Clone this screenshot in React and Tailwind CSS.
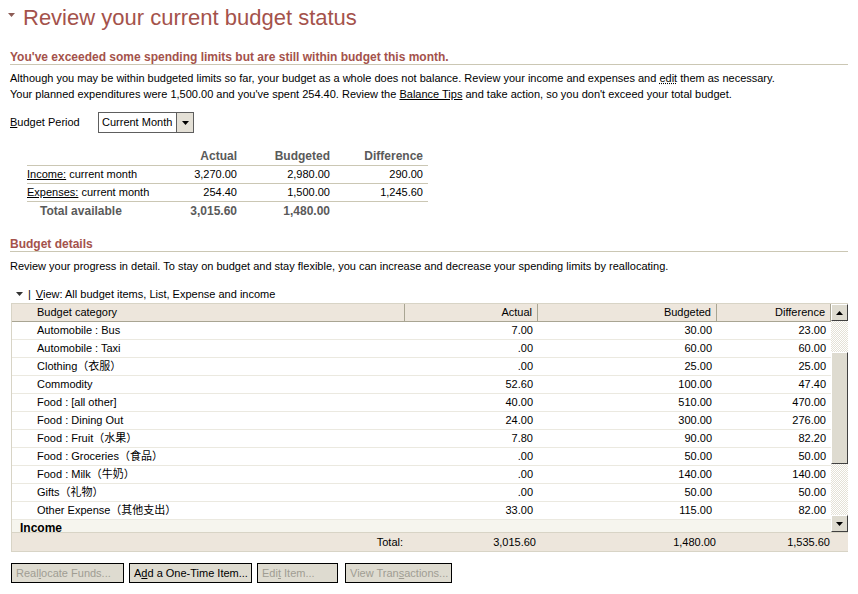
import React from "react";

const rows = [
  ["Automobile : Bus", "7.00", "30.00", "23.00"],
  ["Automobile : Taxi", ".00", "60.00", "60.00"],
  ["Clothing（衣服）", ".00", "25.00", "25.00"],
  ["Commodity", "52.60", "100.00", "47.40"],
  ["Food : [all other]", "40.00", "510.00", "470.00"],
  ["Food : Dining Out", "24.00", "300.00", "276.00"],
  ["Food : Fruit（水果）", "7.80", "90.00", "82.20"],
  ["Food : Groceries（食品）", ".00", "50.00", "50.00"],
  ["Food : Milk（牛奶）", ".00", "140.00", "140.00"],
  ["Gifts（礼物）", ".00", "50.00", "50.00"],
  ["Other Expense（其他支出）", "33.00", "115.00", "82.00"],
];

const cols = "grid grid-cols-[393px_133px_179px_114px]";

const Tri = ({ className = "" }) => (
  <svg width="7" height="4" viewBox="0 0 7 4" className={className}>
    <path d="M0 0h7L3.5 4z" fill="currentColor" />
  </svg>
);

const Btn = ({ children, disabled, w }) => (
  <button
    className={`h-[20px] ${w} border border-black bg-[#dedbd0] text-left pl-[4px] text-[11px] leading-none ${disabled ? "text-[#a09d93]" : "text-black"}`}
  >
    {children}
  </button>
);

const App = () => {
  return (
    <div className="w-[858px] h-[594px] bg-white text-black text-[11px] font-['Liberation_Sans','Noto_Sans_CJK_SC',sans-serif] overflow-hidden">
      {/* title */}
      <div className="h-[36px] flex items-center pl-[8px] text-[#a4524b]">
        <Tri className="text-[#8c5c55] mr-[8px] -mt-[6px]" />
        <span className="text-[22px] leading-none">Review your current budget status</span>
      </div>

      <div className="px-[10px]">
        <div className="mt-[14px] h-[15px] leading-[14px] font-bold text-[12px] text-[#a4524b] border-b border-[#cbc7b4]">
          You've exceeded some spending limits but are still within budget this month.
        </div>
        <div className="mt-[5px] leading-[16px]">
          <div>
            Although you may be within budgeted limits so far, your budget as a whole does not balance. Review your income and expenses and{" "}
            <span className="underline decoration-dotted">edit</span> them as necessary.
          </div>
          <div>
            Your planned expenditures were 1,500.00 and you've spent 254.40. Review the{" "}
            <span className="underline">Balance Tips</span> and take action, so you don't exceed your total budget.
          </div>
        </div>

        {/* budget period */}
        <div className="mt-[10px] flex items-center h-[21px]">
          <span className="w-[88px]">
            <span className="underline">B</span>udget Period
          </span>
          <div className="w-[96px] h-[21px] border border-[#5e5e5e] flex items-stretch">
            <span className="flex-1 flex items-center pl-[3px]">Current Month</span>
            <span className="w-[17px] bg-[#e4e0d6] border-l border-[#5e5e5e] flex items-center justify-center">
              <Tri className="text-black" />
            </span>
          </div>
        </div>

        {/* summary */}
        <div className="mt-[14px] ml-[17px] w-[401px]">
          <div className="grid grid-cols-[135px_80px_93px_93px] h-[19px] items-center border-b border-[#cbc7b4] font-bold text-[#5a5a5a] text-[12px]">
            <span></span>
            <span className="text-right pr-[5px]">Actual</span>
            <span className="text-right pr-[5px]">Budgeted</span>
            <span className="text-right pr-[5px]">Difference</span>
          </div>
          <div className="grid grid-cols-[135px_80px_93px_93px] h-[18px] items-center border-b border-[#cbc7b4]">
            <span><span className="underline">Income:</span> current month</span>
            <span className="text-right pr-[5px]">3,270.00</span>
            <span className="text-right pr-[5px]">2,980.00</span>
            <span className="text-right pr-[5px]">290.00</span>
          </div>
          <div className="grid grid-cols-[135px_80px_93px_93px] h-[18px] items-center border-b border-[#cbc7b4]">
            <span><span className="underline">Expenses:</span> current month</span>
            <span className="text-right pr-[5px]">254.40</span>
            <span className="text-right pr-[5px]">1,500.00</span>
            <span className="text-right pr-[5px]">1,245.60</span>
          </div>
          <div className="grid grid-cols-[135px_80px_93px_93px] h-[17px] items-center font-bold text-[#5a5a5a] text-[12px]">
            <span className="pl-[13px]">Total available</span>
            <span className="text-right pr-[5px]">3,015.60</span>
            <span className="text-right pr-[5px]">1,480.00</span>
            <span></span>
          </div>
        </div>

        <div className="mt-[18px] h-[15px] leading-[14px] font-bold text-[12px] text-[#a4524b] border-b border-[#cbc7b4]">
          Budget details
        </div>
        <div className="mt-[6px] leading-[16px]">
          Review your progress in detail. To stay on budget and stay flexible, you can increase and decrease your spending limits by reallocating.
        </div>

        <div className="mt-[12px] h-[16px] flex items-center pl-[6px]">
          <Tri className="text-[#333]" />
          <span className="ml-[5px] mr-[5px]">|</span>
          <span><span className="underline">V</span>iew: All budget items, List, Expense and income</span>
        </div>
      </div>

      {/* grid */}
      <div className="mt-[1px] ml-[11px] w-[837px] border-l border-t border-[#d8d4c6]">
        <div className="flex h-[228px]">
          <div className="w-[819px] overflow-hidden">
            <div className={`${cols} h-[18px] bg-[#ede6dc] border-b border-[#a9a593]`}>
              <span className="flex items-center pl-[25px] border-r border-[#a9a593]">Budget category</span>
              <span className="flex items-center justify-end pr-[5px] border-r border-[#a9a593]">Actual</span>
              <span className="flex items-center justify-end pr-[5px] border-r border-[#a9a593]">Budgeted</span>
              <span className="flex items-center justify-end pr-[5px] border-r border-[#a9a593]">Difference</span>
            </div>
            {rows.map((r) => (
              <div key={r[0]} className={`${cols} h-[18px] border-b border-[#ebe9e0]`}>
                <span className="flex items-center pl-[25px] whitespace-nowrap">{r[0]}</span>
                <span className="flex items-center justify-end pr-[5px]">{r[1]}</span>
                <span className="flex items-center justify-end pr-[5px]">{r[2]}</span>
                <span className="flex items-center justify-end pr-[5px]">{r[3]}</span>
              </div>
            ))}
            <div className="h-[18px] bg-[#f6f5ee] flex items-start pt-[1px] pl-[8px] font-bold text-[12px] leading-[14px]">Income</div>
          </div>
          {/* scrollbar */}
          <div className="w-[17px] flex flex-col bg-[repeating-conic-gradient(#ffffff_0_25%,#e4e1d6_0_50%)] bg-[length:2px_2px]">
            <div className="h-[17px] bg-[#dedbd0] border border-t-white border-l-white border-r-[#404040] border-b-[#404040] flex items-center justify-center">
              <Tri className="text-black rotate-180" />
            </div>
            <div className="h-[31px]" />
            <div className="h-[112px] bg-[#dedbd0] border border-t-white border-l-white border-r-[#404040] border-b-[#404040]" />
            <div className="flex-1" />
            <div className="h-[17px] bg-[#dedbd0] border border-t-white border-l-white border-r-[#404040] border-b-[#404040] flex items-center justify-center">
              <Tri className="text-black" />
            </div>
          </div>
        </div>
        <div className="flex h-[20px] bg-[#ede6dc] border-t border-b border-[#d8d4c6]">
          <div className={`${cols} w-[819px]`}>
            <span className="flex items-center justify-end pr-[2px]">Total:</span>
            <span className="flex items-center justify-end pr-[2px]">3,015.60</span>
            <span className="flex items-center justify-end pr-[1px]">1,480.00</span>
            <span className="flex items-center justify-end pr-[1px]">1,535.60</span>
          </div>
        </div>
      </div>

      {/* buttons */}
      <div className="mt-[11px] ml-[11px] flex gap-[5px]">
        <Btn disabled w="w-[113px]">Real<span className="underline">l</span>ocate Funds...</Btn>
        <Btn w="w-[123px]">A<span className="underline">d</span>d a One-Time Item...</Btn>
        <Btn disabled w="w-[81px]">Edi<span className="underline">t</span> Item...</Btn>
        <span className="ml-[2px] flex">
          <Btn disabled w="w-[107px]">View Tran<span className="underline">s</span>actions...</Btn>
        </span>
      </div>
    </div>
  );
};

export default App;
